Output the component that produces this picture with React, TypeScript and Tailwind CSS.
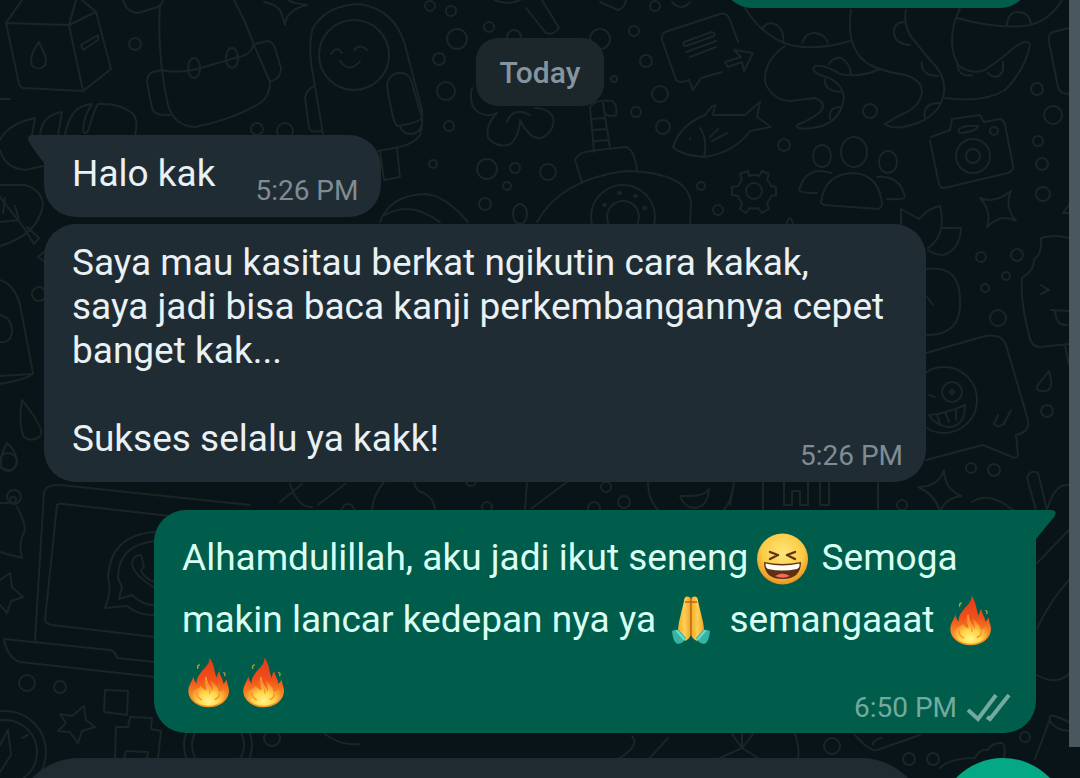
import type { ReactNode } from "react";

function Wallpaper() {
  const bubbles = [
    [135, 44, 6], [257, 129, 6], [285, 131, 8], [430, 6, 5], [451, 11, 5], [489, 27, 5],
    [457, 39, 10], [514, 37, 7], [439, 59, 6], [446, 91, 9], [600, 39, 10], [634, 31, 5],
    [646, 61, 6], [614, 79, 3], [660, 94, 8], [636, 112, 5], [663, 127, 7], [449, 126, 5],
    [433, 164, 4], [487, 169, 10], [515, 168, 5], [548, 172, 8], [507, 186, 4], [485, 204, 6],
    [655, 6, 5], [701, 186, 4], [718, 210, 5], [870, 111, 7], [784, 145, 6], [1037, 89, 6],
    [1053, 115, 9], [1038, 141, 5], [1042, 164, 6], [1043, 194, 7], [981, 257, 5], [1017, 255, 6],
    [1006, 276, 4], [985, 288, 4], [998, 318, 8], [1047, 411, 6], [971, 468, 5], [994, 470, 6],
    [902, 505, 5], [27, 683, 8], [60, 687, 6], [39, 294, 7], [14, 497, 7], [8, 462, 9],
    [832, 746, 8], [909, 759, 6], [933, 759, 6], [1025, 737, 5], [272, 738, 8], [606, 487, 5],
    [624, 502, 6], [487, 507, 5], [594, 508, 6], [471, 481, 5], [348, 510, 6],
  ];
  return (
    <svg
      className="absolute inset-0 h-full w-full"
      viewBox="0 0 1080 778"
      preserveAspectRatio="xMidYMid slice"
      fill="none"
      stroke="#1a2525"
      strokeWidth="2"
      strokeLinecap="round"
      strokeLinejoin="round"
      aria-hidden="true"
    >
      {bubbles.map(([cx, cy, r]) => (
        <circle key={`${cx}-${cy}`} cx={cx} cy={cy} r={r} />
      ))}
      {/* milk carton */}
      <path d="M6 23 69 25 83 91 23 88Q20 87 19 84ZM6 23 22 0M69 25 76 0M69 25 96 12 111 69 83 91M82 0 96 12M39 42C34 50 31 55 31 61 31 71 46 71 46 61 46 54 42 50 39 42M81 45 98 35V40L83 50Z" />
      {/* backpack */}
      <path d="M160 5C158 30 160 70 168 105Q174 126 195 127 230 120 257 105 270 98 270 82L254 45Q245 20 234 0M160 70Q178 74 197 69L235 58Q252 55 253 45M163 70 153 72Q147 74 147 82L152 108Q154 116 170 115M255 44 268 41Q273 42 275 48L281 68Q281 79 271 81M123 0Q126 12 138 13L158 7Q164 2 163 0" />
      <ellipse cx="194" cy="68" rx="6" ry="10" />
      <ellipse cx="232" cy="58" rx="6" ry="10" />
      <path d="M264 2Q278 5 281 12L285 25Q286 10 307 5 292 3 288 0" />
      {/* croissant and leaf */}
      <path d="M0 140Q8 124 35 118L32 135M40 135Q42 115 62 112L58 135M65 135Q70 105 92 104 84 115 83 130 86 138 90 125 94 110 98 104 120 103 132 113 139 120 135 135M0 150Q5 168 25 170L43 166M0 99H10M0 185H25Q42 190 43 205 38 235 0 246M0 197 24 228 34 244 39 238 27 227M3 213 5 198M0 222 19 220 15 206" />
      {/* astronaut */}
      <circle cx="354" cy="55" r="35" />
      <path d="M323 134 313 75Q308 50 312 30 325 5 360 4 395 10 405 45L422 110Q423 125 420 135 415 143 400 147L378 151M340 61Q350 74 360 61M331 54Q337 45 342 53M354 50Q360 43 367 50M315 85Q306 90 305 98L309 128Q311 133 322 131M387 85Q388 75 398 73 408 72 411 80L422 118Q418 123 397 126 392 120 387 85M400 126Q402 134 412 134 420 133 422 124M380 151 384 180 400 177 397 149" />
      <path d="M495 0Q507 6 520 0M526 8 545 32Q552 37 559 28L542 0M600 2 618 10Q625 8 626 0M672 2Q681 12 690 2" />
      {/* clover */}
      <path d="M472 88Q468 105 478 112 488 118 497 113 485 125 488 138 500 150 512 143 520 133 520 120 530 140 542 138 556 130 553 117 548 108 535 108M507 122Q513 106 530 115" />
      {/* submarine */}
      <path d="M590 107 594 152M603 103 610 148M590 107Q595 99 612 101 618 105 616 115 608 118 604 112M591 119 605 118M593 130 607 129M594 141 609 140M582 182 575 160Q577 153 590 151L625 147Q634 148 637 170M537 222Q560 180 625 171 690 172 691 205L690 223M380 222Q390 195 425 194 445 195 468 222M385 215Q410 200 440 222" />
      <circle cx="623" cy="217" r="32" />
      <circle cx="623" cy="217" r="16" />
      <path d="M619 193h1M635 196h1M604 205h1M644 208h1" strokeWidth="4" />
      <ellipse cx="520" cy="214" rx="7" ry="10" />
      {/* chat note */}
      <path d="M720 14 665 32Q661 35 662 40L676 80Q680 84 689 80L693 90 701 78 722 72M720 14Q727 12 730 20L738 42M684 42 712 32Q716 34 714 36L686 46Q682 46 684 42M686 52 716 41M690 57 716 47M725 62 741 57 734 50 753 53 744 71 742 62 728 67Z" />
      {/* fish */}
      <path d="M673 147Q680 125 705 115 712 105 715 105L713 115H745L760 102 757 117 771 127 750 131Q735 152 705 157 680 155 673 147M700 128Q708 140 704 157M690 138v1M710 137 718 129M712 141 727 133" />
      {/* octopus */}
      <path d="M745 8Q765 40 795 46 820 50 850 41M785 46Q764 60 765 82 772 100 790 101L815 98Q828 103 820 112 812 119 797 125 795 130 812 128 840 125 844 98 842 80 820 75 810 70 815 66 825 64 840 74 860 78 880 69M851 10Q845 50 870 65 885 72 905 75 922 80 922 92 920 108 900 115L885 124Q895 132 920 122 942 112 944 92 946 75 930 60L912 38Q903 25 906 10M960 8Q945 40 958 65 970 75 985 70 1000 60 1015 47 1028 38 1030 45 1025 70 1005 90 985 103 945 98M957 18Q1000 30 1030 25 1050 20 1062 0" />
      <path d="M762 29Q768 20 777 25 785 32 783 43M802 43Q806 32 815 33 825 34 828 43M905 22Q893 22 894 34 896 44 910 45M829 64Q833 57 841 58 850 63 851 74M825 79Q823 90 840 92M830 119Q828 107 841 107M922 62Q920 75 938 76M925 118Q922 103 940 103M957 62Q958 78 972 75M988 73Q998 82 1003 70V62M1007 25Q1008 12 1018 12 1029 12 1031 24M1069 28 1053 32Q1048 34 1049 42L1058 87Q1060 94 1069 94" />
      {/* people */}
      <ellipse cx="854" cy="152" rx="13" ry="15" />
      <ellipse cx="822" cy="156" rx="9" ry="11" />
      <ellipse cx="888" cy="162" rx="9" ry="11" />
      <path d="M821 203Q824 173 855 173 880 176 882 205L879 209 824 205ZM831 173Q806 165 799 190 800 193 817 193M877 177Q900 175 905 197 904 200 887 199M787 223Q790 214 793 223" />
      {/* gear */}
      <circle cx="754" cy="191" r="8" />
      <path d="M749 176 748 171 740 174 742 180Q739 183 738 186L732 187V195L738 196Q739 200 742 203L740 209 746 213 750 208Q754 209 758 208L762 213 769 209 767 203Q770 200 771 196L776 195V187L771 186Q770 182 767 180L769 174 762 171 759 176Q754 174 749 176Z" />
      {/* camera */}
      <path d="M931 137 950 130 952 119 980 115 984 122 1000 119Q1004 120 1005 125L1013 165Q1014 171 1008 173L944 188Q940 188 939 184L930 141M959 129Q965 125 978 126 977 131 962 133 957 133 959 129" />
      <circle cx="973" cy="156" r="17" />
      <circle cx="973" cy="156" r="7" />
      <circle cx="994" cy="131" r="4" />
      <path d="M980 198Q995 204 1011 191 1004 207 1016 221 1001 213 987 227 992 211 980 198Z" />
      {/* lotus */}
      <path d="M901 224V209L919 219Q930 207 940 206 947 235 928 248M943 228H961Q960 250 943 255 935 255 928 250M1069 205 1063 213H1069M927 269Q960 265 960 300 962 335 927 335M927 297 933 305" />
      {/* ice cream */}
      <path d="M1069 238Q1055 234 1041 238 1042 255 1034 259 1035 270 1022 278 1020 300 1029 335 1031 347 1040 347L1069 344M1041 285 1049 290 1041 294M1051 310 1069 311M1055 311Q1056 326 1067 325M1065 345 1069 365M1049 371Q1038 385 1037 386 1036 392 1045 391 1055 390 1049 371" />
      {/* winking sticker */}
      <path d="M926 353 985 336Q1002 333 1006 345L1028 420Q1030 432 1016 435L1018 455Q1016 460 1010 456L983 445 926 460M929 415Q945 414 965 405 965 427 948 427 935 425 929 415M937 414 940 424M945 412 949 422M956 409V420M929 395 935 397M998 415 994 424Q1000 430 1005 421M1011 410 1004 424" />
      <circle cx="944" cy="400" r="33" />
      <circle cx="952" cy="392" r="10" />
      <circle cx="952" cy="392" r="2" />
      <path d="M918 487Q938 487 944 470 944 488 961 496 945 498 940 512 936 495 918 487ZM1036 510 1027 478Q1030 469 1038 473L1047 510Q1055 483 1069 485M972 502Q990 490 1015 512" />
      {/* strip between the bubbles */}
      <path d="M763 482V510M784 482V505H792V491H800V505H808V482M820 482V505H829V482M878 482V510M734 482Q732 500 724 510M280 502 302 484M290 484Q298 508 312 507M318 505 345 484M372 510Q373 495 384 482M414 482Q416 492 424 493 435 500 435 510M527 482 525 510M532 508 567 482M648 482Q648 500 658 510M734 482 730 505M680 496Q705 497 709 489 708 507 694 508 684 507 680 496" />
      {/* laptop */}
      <path d="M44 492Q46 484 60 485L250 505M44 492 35 640M57 505 45 620Q46 624 52 625L155 637M57 505Q58 503 64 504L170 516M4 640Q8 658 20 662L155 677M4 639 110 650Q116 652 117 658L155 662M155 532Q110 535 108 578 112 590 105 608L127 606Q140 616 155 615M155 541Q118 545 118 578L122 587 119 599 132 595Q144 606 155 605M155 588Q133 575 132 563 133 555 141 555L144 566 141 571Q146 580 155 582" />
      <path d="M0 503H8M17 507Q27 525 24 533 18 543 22 558L0 552M0 580 10 573 12 587 23 597 11 601 7 613 0 605M60 714 72 716 84 706 86 720 95 727 82 731 78 743 70 732 58 731 66 723ZM105 690 128 691 127 715 104 712ZM115 758 116 727H128L130 717 152 718 151 729 161 731 158 758M124 758 126 751 148 752 147 758" />
      <circle cx="13" cy="500" r="3" />
      <circle cx="5" cy="752" r="41" />
      <circle cx="5" cy="752" r="32" />
      <path d="M0 745 8 730 11 755 0 772M22 738 28 735M0 280Q15 285 20 305L33 373Q32 378 0 384M0 376 33 374M0 315Q12 318 12 332 10 344 0 342M22 400Q18 425 24 437 32 443 40 436 46 430 22 400M7 443Q-2 460 2 468 15 475 17 460 15 450 7 443M38 257 44 252M38 257 44 261" />
      <circle cx="218" cy="745" r="34" />
      <circle cx="218" cy="745" r="26" />
      {/* bottom edge doodles */}
      <path d="M325 734Q340 746 360 744M720 758 742 748 758 758M742 748 732 734M742 748 753 734M742 748V734M795 734Q800 750 798 758M855 735Q870 752 877 750L920 735M873 745Q872 740 882 738M940 768Q950 758 975 758 980 748 988 750 992 742 1002 743 1006 746 1004 757M1035 759 1050 719Q1048 714 1055 716L1069 722M1049 720Q1055 730 1069 731M1037 563 1069 530M1037 628Q1052 598 1069 580M1037 675Q1055 686 1069 674M620 758Q640 745 632 736M650 758 668 738" />
    </svg>
  );
}

function Laughing() {
  return (
    <svg className="inline-block h-[55px] w-[55px] align-middle" viewBox="2 0 55 55" role="img" aria-label="laughing">
      <defs>
        <radialGradient id="face" cx="50%" cy="38%" r="62%">
          <stop offset="0" stopColor="#fde57c" />
          <stop offset="0.65" stopColor="#fccb45" />
          <stop offset="1" stopColor="#e9901f" />
        </radialGradient>
      </defs>
      <circle cx="27.500" cy="26" r="25.500" fill="url(#face)" />
      <path d="M15 19 23 22 15 26M40 19 32 22 40 26" fill="none" stroke="#5b3512" strokeWidth="2.400" strokeLinecap="round" strokeLinejoin="round" />
      <path d="M9 29Q27 33 46 29 46 46 27.500 46 9 46 9 29Z" fill="#5d2f13" />
      <path d="M10.500 30.500Q27 34.500 44.500 30.500 45 35 42 36 27 39 13 36 10.500 35 10.500 30.500Z" fill="#fffdf5" />
      <path d="M20 43Q27 38 35 43 27 46.500 20 43Z" fill="#ef6c5c" />
    </svg>
  );
}

function Praying() {
  return (
    <svg className="inline-block h-[55px] w-[55px] align-middle" viewBox="1 2 55 55" role="img" aria-label="thank you">
      <defs>
        <linearGradient id="hand" x1="0" x2="1">
          <stop offset="0" stopColor="#f5ab27" />
          <stop offset="0.5" stopColor="#ffd055" />
          <stop offset="1" stopColor="#eea024" />
        </linearGradient>
      </defs>
      <path d="M27 6Q26 3 23 3.500 20 4 20 8L15 29Q14 34 14 38L21 48Q26 46 27 41Z" fill="url(#hand)" />
      <path d="M27 6Q28 3 31 3.500 34 4 34 8L39 29Q40 34 40 38L33 48Q28 46 27 41Z" fill="url(#hand)" />
      <path d="M27 5V43M21 9H33" stroke="#bd6910" strokeWidth="1.500" fill="none" />
      <path d="M8 38Q12 36 15 37L22 45Q20 50 14 51 9 50 8 38ZM46 38Q42 36 39 37L32 45Q34 50 40 51 45 50 46 38Z" fill="#36b3a5" />
      <path d="M13 38 20 46M41 38 34 46" stroke="#6fdccb" strokeWidth="2" strokeLinecap="round" />
    </svg>
  );
}

function Fire() {
  return (
    <svg className="inline-block h-[55px] w-[55px] align-middle" viewBox="6 20 165 165" role="img" aria-label="fire">
      <defs>
        <linearGradient id="flame" x1="0" y1="0" x2="0" y2="1">
          <stop offset="0" stopColor="#e33a17" />
          <stop offset="0.45" stopColor="#f0501a" />
          <stop offset="0.75" stopColor="#f98a22" />
          <stop offset="1" stopColor="#f39a24" />
        </linearGradient>
        <radialGradient id="core" cx="50%" cy="84%" r="75%">
          <stop offset="0" stopColor="#fff58c" />
          <stop offset="0.4" stopColor="#ffd547" />
          <stop offset="1" stopColor="#f0501a" />
        </radialGradient>
      </defs>
      <path d="M88 22C90 45 68 55 60 70 52 80 48 92 50 100 44 95 42 85 40 78 38 92 24 105 25 125 27 152 55 171 85 171 118 171 146 152 147 122 147 108 140 100 141 88 136 92 134 98 130 100 130 88 120 78 118 62 112 68 112 78 110 82 102 66 104 40 88 22Z" fill="url(#flame)" />
      <path d="M70 76C66 94 80 106 80 120 72 118 66 112 62 106 58 116 36 116 34 134 38 155 62 166 86 166 113 166 136 153 138 132 138 124 134 120 132 116 128 120 122 124 116 124 114 108 98 98 92 86 90 98 102 110 98 124 92 100 72 94 70 76Z" fill="url(#core)" />
      <path d="M78 82C75 95 92 108 90 128M51 125C49 137 55 143 64 148M118 128C119 137 113 144 106 147" fill="none" stroke="#fb9a33" strokeWidth="5" strokeLinecap="round" />
      <path d="M53 54Q51 46 58 44M131 67Q137 68 134 76" fill="none" stroke="#a89f2e" strokeWidth="4" strokeLinecap="round" />
    </svg>
  );
}

function DoubleCheck() {
  return (
    <svg className="h-7 w-11" viewBox="0 0 44 28" fill="none" stroke="#73aa9e" strokeWidth="4" role="img" aria-label="Delivered">
      <path d="M1 16 11 25 29 1M20 23 23 25 42 1" />
    </svg>
  );
}

function Tail({ side }: { side: "left" | "right" }) {
  return side === "left" ? (
    <svg className="absolute top-0 -left-5 h-8 w-5" viewBox="0 0 20 32" fill="#202c33" aria-hidden="true">
      <path d="M20 0H8Q2 0 5 7Q7 11 20 28Z" />
    </svg>
  ) : (
    <svg className="absolute top-0 -right-5 h-8 w-5" viewBox="0 0 20 32" fill="#005d4b" aria-hidden="true">
      <path d="M0 0H16Q22 1 18 7L0 29Z" />
    </svg>
  );
}

function LastLine({ children, time }: { children: ReactNode; time: string }) {
  return (
    <div className="flex items-end justify-between gap-10">
      <p className="pb-[10px]">{children}</p>
      <time className="text-[28px] leading-[30px] text-[#7f8c94]">{time}</time>
    </div>
  );
}

export default function App() {
  return (
    <div className="relative flex h-screen flex-col overflow-hidden bg-[#091419] font-['Roboto',sans-serif]">
      <Wallpaper />
      <main className="relative flex shrink-0 flex-col px-11">
        <div className="mr-[6px] h-2 w-[308px] self-end overflow-hidden">
          <div className="-mt-14 h-16 rounded-[30px] bg-[#005d4b]" />
        </div>
        <div className="mt-[30px] self-center rounded-[22px] bg-[#1c272c] px-6 pt-[18px] pb-4 text-[30px] leading-[34px] font-medium text-[#8495a0]">
          Today
        </div>
        <div className="mt-[29px] flex flex-col items-start gap-[7px] text-[37px] leading-[44px] text-[#e9f1f5]">
          <div className="relative rounded-[32px] rounded-tl-none bg-[#202c33] pt-[17px] pr-[23px] pb-[11px] pl-7">
            <Tail side="left" />
            <LastLine time="5:26 PM">Halo kak</LastLine>
          </div>
          <div className="w-full max-w-[882px] rounded-[32px] bg-[#202c33] pt-[17px] pr-[23px] pb-[11px] pl-7">
            <p className="mb-11">
              Saya mau kasitau berkat ngikutin cara kakak,
              <br />
              saya jadi bisa baca kanji perkembangannya cepet
              <br />
              banget kak...
            </p>
            <LastLine time="5:26 PM">Sukses selalu ya kakk!</LastLine>
          </div>
        </div>
        <div className="relative mt-7 grid w-full max-w-[882px] self-end rounded-[32px] rounded-tr-none bg-[#005d4b] pt-[17px] pr-[25px] pb-[9px] pl-7">
          <Tail side="right" />
          <p className="col-start-1 row-start-1 pb-[11px] text-[37px] leading-[62px] text-[#d9fff4]">
            Alhamdulillah, aku jadi ikut seneng <Laughing /> Semoga makin lancar kedepan nya ya <Praying /> semangaaat <Fire />
            <Fire />
            <Fire />
          </p>
          <div className="col-start-1 row-start-1 flex items-center gap-[10px] self-end justify-self-end text-[28px] leading-8 text-[#73aa9e]">
            <time>6:50 PM</time>
            <DoubleCheck />
          </div>
        </div>
      </main>
      <footer className="relative mt-[25px] flex shrink-0 gap-3 pr-3 pl-[14px]">
        <div className="h-[130px] flex-1 rounded-full bg-[#1f2a31]" />
        <div className="h-[130px] w-[130px] rounded-full bg-[#05a884]" />
      </footer>
      <div className="absolute top-0 right-0 h-[96%] w-[11px] bg-[#5f6e75]/75" />
    </div>
  );
}
